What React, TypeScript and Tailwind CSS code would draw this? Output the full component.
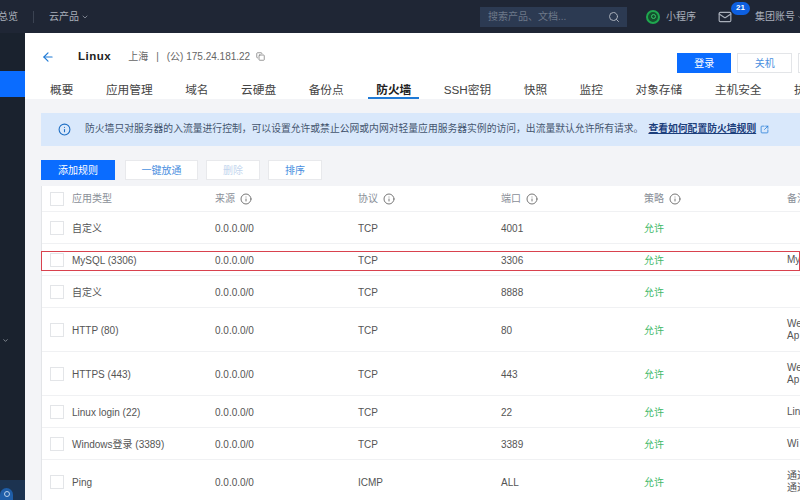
import { ArrowLeft, ChevronDown, Copy, Info, Mail, Search, SquareArrowOutUpRight } from 'lucide-react';

const font = "font-['Liberation_Sans','Noto_Sans_CJK_SC',sans-serif]";

const tabs = ['概要', '应用管理', '域名', '云硬盘', '备份点', '防火墙', 'SSH密钥', '快照', '监控', '对象存储', '主机安全', '执行命令'];

const rules = [
  { app: '自定义', proto: 'TCP', port: '4001', note: [], h: 'h-[32px]' },
  { app: 'MySQL (3306)', proto: 'TCP', port: '3306', note: ['My'], h: 'h-[32px]', marked: true },
  { app: '自定义', proto: 'TCP', port: '8888', note: [], h: 'h-[32px]' },
  { app: 'HTTP (80)', proto: 'TCP', port: '80', note: ['We', 'Ap'], h: 'h-[44px]' },
  { app: 'HTTPS (443)', proto: 'TCP', port: '443', note: ['We', 'Ap'], h: 'h-[44px]' },
  { app: 'Linux login (22)', proto: 'TCP', port: '22', note: ['Lin'], h: 'h-[32px]' },
  { app: 'Windows登录 (3389)', proto: 'TCP', port: '3389', note: ['Wi'], h: 'h-[32px]' },
  { app: 'Ping', proto: 'ICMP', port: 'ALL', note: ['通过', '通过'], h: 'h-[44px]' },
];

function Checkbox() {
  return <span className="w-[14px] h-[14px] shrink-0 border border-[#e3e5e8] bg-white" />;
}

function HeadCell({ label }: { label: string }) {
  return (
    <div className="w-[143px] shrink-0 flex items-center gap-[5px]">
      {label}
      <Info className="w-[12px] h-[12px] text-[#777]" />
    </div>
  );
}

export default function App() {
  return (
    <div className={`w-[800px] h-[500px] overflow-hidden flex flex-col bg-[#f3f4f7] ${font}`}>
      {/* Top bar */}
      <header className="h-[33px] shrink-0 bg-[#1f2635] flex items-center text-[10px] text-[#a9afba] whitespace-nowrap">
        <span className="w-[18px] shrink-0 overflow-hidden flex justify-end">总览</span>
        <span className="w-px h-[12px] shrink-0 bg-[#3b4352] ml-[15px]" />
        <span className="ml-[15px]">云产品</span>
        <ChevronDown className="w-[8px] h-[8px] ml-[2px] shrink-0" />
        <div className="ml-[391px] w-[147px] h-[20px] shrink-0 bg-[#2c3a52] flex items-center justify-between pl-[8px] pr-[7px] text-[#6d7889]">
          搜索产品、文档...
          <Search className="w-[12px] h-[12px] text-[#a9afba]" />
        </div>
        <span className="ml-[19px] w-[14px] h-[14px] shrink-0 rounded-full border-2 border-[#1fa74f] bg-[#14512e] flex items-center justify-center">
          <span className="w-[5px] h-[5px] rounded-full border border-[#35c46a]" />
        </span>
        <span className="ml-[6px]">小程序</span>
        <div className="relative ml-[22px] shrink-0">
          <Mail className="w-[14px] h-[14px]" />
          <span className="absolute -top-[8px] left-[13px] w-[19px] h-[13px] rounded-full bg-[#0d5fe0] text-white text-[8px] font-bold flex items-center justify-center">21</span>
        </div>
        <span className="ml-[23px]">集团账号</span>
        <ChevronDown className="w-[6px] h-[6px] ml-[2px] shrink-0" />
      </header>

      <div className="flex-1 flex min-h-0">
        {/* Sidebar */}
        <aside className="w-[25px] shrink-0 bg-[#1a222e] flex flex-col">
          <div className="h-[26px] mt-[38px] bg-[#0a6cff]" />
          <ChevronDown className="w-[7px] h-[7px] text-[#c5c9d0] ml-[2px] mt-[240px]" />
          <div className="mt-auto h-[20px] bg-[#1c3350] flex items-end">
            <span className="w-[13px] h-[12px] rounded-t-full bg-[#1f5ea8] flex justify-center pt-[3px]">
              <span className="w-[6px] h-[6px] rounded-full border border-[#b9d0ea]" />
            </span>
          </div>
        </aside>

        <main className="flex-1 min-w-0 flex flex-col">
          {/* Title and tabs */}
          <section className="h-[66px] shrink-0 bg-white pl-[16px] flex flex-col">
            <div className="flex items-center h-[50px] pb-[3px] w-max text-[10px] text-[#666] whitespace-nowrap">
              <ArrowLeft className="w-[14px] h-[14px] text-[#1f7ad6] shrink-0" />
              <span className="ml-[23px] text-[11.5px] font-bold text-[#222] tracking-[0.5px]">Linux</span>
              <span className="ml-[17px]">上海</span>
              <span className="ml-[8px]">|</span>
              <span className="ml-[8px]">(公) 175.24.181.22</span>
              <Copy className="w-[9px] h-[9px] ml-[6px] text-[#777] shrink-0" />
              <button className="ml-[412px] w-[54px] h-[20px] mt-[13px] bg-[#0a6cff] text-white shrink-0">登录</button>
              <button className="ml-[6px] w-[55px] h-[20px] mt-[13px] bg-white border border-[#e3e5e8] text-[#4a8fe0] shrink-0">关机</button>
              <button className="ml-[6px] w-[54px] h-[20px] mt-[13px] bg-white border border-[#e3e5e8] shrink-0" />
            </div>
            <nav className="flex items-start w-max ml-[1px] text-[11.7px] text-[#444] whitespace-nowrap">
              {tabs.map((t) => (
                <span key={t} className={`px-[8px] mr-[16.5px] leading-[14px] border-b-2 ${t === '防火墙' ? 'font-bold text-[#222] border-[#1f7ad6]' : 'border-transparent'}`}>
                  {t}
                </span>
              ))}
            </nav>
          </section>

          {/* Notice */}
          <section className="mt-[14px] ml-[16px] h-[33px] shrink-0 bg-[#d9e8fb] flex items-center pl-[17px] text-[9.8px] text-[#44556e] whitespace-nowrap">
            <Info className="w-[13px] h-[13px] text-[#1f6fc4] shrink-0" />
            <span className="ml-[14px]">防火墙只对服务器的入流量进行控制，可以设置允许或禁止公网或内网对轻量应用服务器实例的访问，出流量默认允许所有请求。</span>
            <span className="ml-[5px] font-bold text-[#1c3f7c] underline">查看如何配置防火墙规则</span>
            <SquareArrowOutUpRight className="w-[9px] h-[9px] ml-[4px] text-[#1f7ad6] shrink-0" />
          </section>

          {/* Toolbar */}
          <div className="mt-[14px] ml-[16px] flex text-[10px] shrink-0">
            <button className="w-[74px] h-[20px] bg-[#0a6cff] text-white">添加规则</button>
            <button className="ml-[10px] w-[73px] h-[20px] bg-white border border-[#e8e9ec] text-[#4a8fe0]">一键放通</button>
            <button className="ml-[8px] w-[54px] h-[20px] bg-white border border-[#e8e9ec] text-[#c4d6ee]">删除</button>
            <button className="ml-[8px] w-[54px] h-[20px] bg-white border border-[#e8e9ec] text-[#4a8fe0]">排序</button>
          </div>

          {/* Rules table */}
          <section className="mt-[6px] ml-[16px] flex-1 bg-white border-l border-[#e3e5e8] text-[10px] text-[#555] whitespace-nowrap">
            <div className="h-[26px] flex items-center pl-[8px] text-[#8a8f98] border-b border-[#f0f1f3]">
              <Checkbox />
              <span className="ml-[8px] w-[143px] shrink-0">应用类型</span>
              <HeadCell label="来源" />
              <HeadCell label="协议" />
              <HeadCell label="端口" />
              <HeadCell label="策略" />
              <span>备注</span>
            </div>
            {rules.map((r, i) => (
              <div key={i} className={`${r.h} relative flex items-center pl-[8px] pt-[1px] border-b border-[#f0f1f3]`}>
                <Checkbox />
                <span className="ml-[8px] w-[143px] shrink-0">{r.app}</span>
                <span className="w-[143px] shrink-0">0.0.0.0/0</span>
                <span className="w-[143px] shrink-0">{r.proto}</span>
                <span className="w-[143px] shrink-0">{r.port}</span>
                <span className="w-[143px] shrink-0 text-[#3fb968]">允许</span>
                <span className="leading-[12px]">
                  {r.note.map((n, j) => (
                    <span key={j} className="block">{n}</span>
                  ))}
                </span>
                {r.marked && <span className="absolute -left-[1px] right-0 top-[7px] h-[20px] border border-[#d9424e]" />}
              </div>
            ))}
          </section>
        </main>
      </div>
    </div>
  );
}
